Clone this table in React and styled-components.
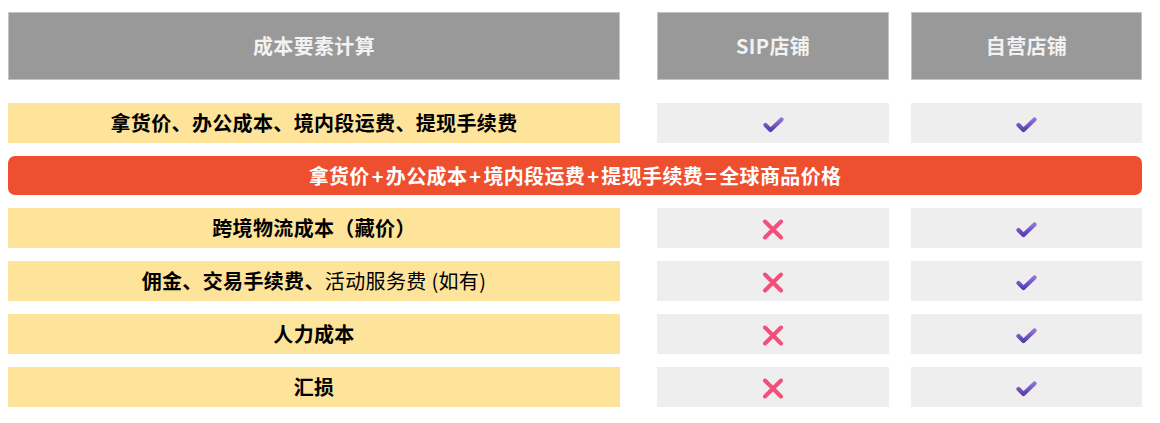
import React from "react";
import styled, { createGlobalStyle } from "styled-components";

const Global = createGlobalStyle`
  html, body { margin: 0; padding: 0; background: #fff; }
  body { font-family: "Noto Sans CJK SC", "Noto Sans", sans-serif; }
`;

const Page = styled.div`
  padding: 12px 8px;
  width: 1134px;
`;

const Row = styled.div`
  display: flex;
  gap: 22px;
  height: ${(p) => p.$h || 40}px;
  margin-bottom: ${(p) => p.$mb ?? 13}px;
`;

const Cell = styled.div`
  box-sizing: border-box;
  flex: 0 0 ${(p) => p.$w}px;
  display: flex;
  align-items: center;
  justify-content: center;
  font-size: 20px;
  font-weight: 700;
  line-height: 1;
  letter-spacing: 0.35px;
  white-space: nowrap;
`;

const HeadCell = styled(Cell)`
  background: #999999;
  border: 1px solid #c4c4c4;
  color: #f2f2f2;
  margin-right: ${(p) => p.$mr || 0}px;
`;

const LabelCell = styled(Cell)`
  background: #fee39a;
  color: #000;
  margin-right: 15px;
`;

const StoreCell = styled(Cell)`
  background: #eeeeee;
  padding-top: 2px;
`;

const Light = styled.span`
  font-weight: 400;
`;

const Formula = styled.div`
  height: 39px;
  margin-bottom: 13px;
  background: #ee4f2e;
  border-radius: 7px;
  color: #fff;
  font-size: 20px;
  font-weight: 700;
  letter-spacing: 0.35px;
  display: flex;
  align-items: center;
  justify-content: center;
  white-space: nowrap;
`;

const Op = styled.span`
  margin: 0 2px;
`;

const Check = () => (
  <svg width="21" height="17" viewBox="0 0 21 17">
    <defs>
      <linearGradient id="cg" x1="0" y1="0" x2="0" y2="1">
        <stop offset="0" stopColor="#8e72d6" />
        <stop offset="1" stopColor="#5a3bb2" />
      </linearGradient>
    </defs>
    <path
      d="M2.5 9 L7.5 14 L18.5 3.5"
      fill="none"
      stroke="url(#cg)"
      strokeWidth="4.2"
      strokeLinecap="round"
      strokeLinejoin="round"
    />
  </svg>
);

const Cross = () => (
  <svg width="22" height="21" viewBox="0 0 22 21">
    <path
      d="M3 2.5 L19 18.5 M19 2.5 L3 18.5"
      fill="none"
      stroke="#f24f79"
      strokeWidth="4"
      strokeLinecap="round"
    />
  </svg>
);

const rows = [
  { label: <>跨境物流成本（藏价）</>, sip: false },
  {
    label: (
      <>
        佣金、交易手续费、<Light>活动服务费 (如有)</Light>
      </>
    ),
    sip: false,
  },
  { label: <>人力成本</>, sip: false },
  { label: <>汇损</>, sip: false },
];

export default function App() {
  return (
    <>
      <Global />
      <Page>
        <Row $h={68} $mb={23}>
          <HeadCell $w={612} $mr={15}>成本要素计算</HeadCell>
          <HeadCell $w={232}>SIP店铺</HeadCell>
          <HeadCell $w={231}>自营店铺</HeadCell>
        </Row>
        <Row>
          <LabelCell $w={612}>拿货价、办公成本、境内段运费、提现手续费</LabelCell>
          <StoreCell $w={232}>
            <Check />
          </StoreCell>
          <StoreCell $w={231}>
            <Check />
          </StoreCell>
        </Row>
        <Formula>
          拿货价<Op>+</Op>办公成本<Op>+</Op>境内段运费<Op>+</Op>提现手续费<Op>=</Op>全球商品价格
        </Formula>
        {rows.map((r, i) => (
          <Row key={i}>
            <LabelCell $w={612}>{r.label}</LabelCell>
            <StoreCell $w={232}>{r.sip ? <Check /> : <Cross />}</StoreCell>
            <StoreCell $w={231}>
              <Check />
            </StoreCell>
          </Row>
        ))}
      </Page>
    </>
  );
}
